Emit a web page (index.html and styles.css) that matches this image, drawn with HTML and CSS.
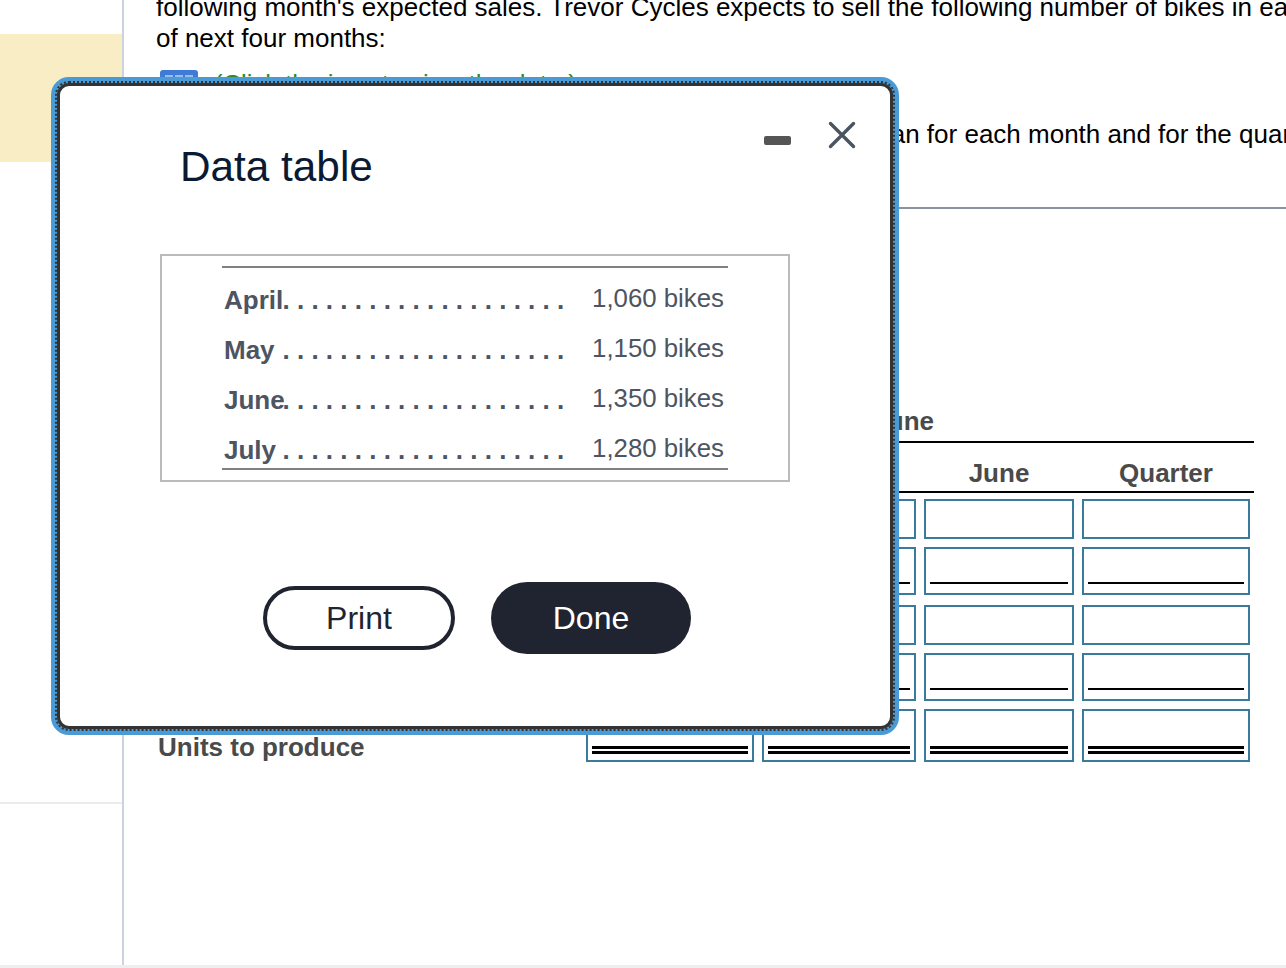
FILE: index.html
```html
<!DOCTYPE html>
<html lang="en">
<head>
<meta charset="utf-8">
<title>Data table</title>
<link rel="stylesheet" href="styles.css">
</head>
<body>
<div class="page">
  <aside class="sidebar">
    <div class="highlight"></div>
    <div class="side-rule"></div>
  </aside>
  <main class="main">
    <p class="intro">following month's expected sales. Trevor Cycles expects to sell the following number of bikes in each<br>of next four months:</p>
    <div class="data-link">
      <svg class="data-icon" viewBox="0 0 38 30" aria-hidden="true"><rect width="38" height="30" rx="3" fill="#3f7bd6"/><path d="M5 5h8v6H5zM15 5h8v6h-8zM25 5h8v6h-8zM5 13h8v6H5zM15 13h8v6h-8zM25 13h8v6h-8zM5 21h8v6H5zM15 21h8v6h-8zM25 21h8v6h-8z" fill="#9dbcee"/></svg>
      <span class="data-text">(Click the icon to view the data.)</span>
    </div>
    <p class="task">Prepare Trevor Cycles' production plan for each month and for the quarter ended June 30.</p>
    <hr class="divider">
    <div class="budget">
      <div class="b-title">April through June</div>
      <div class="b-head"></div>
      <div class="b-head">April</div>
      <div class="b-head">May</div>
      <div class="b-head">June</div>
      <div class="b-head">Quarter</div>
      <div class="b-rule"></div>

      <div class="b-label r1">Budgeted sales</div>
      <div class="cell r1"></div><div class="cell r1"></div><div class="cell r1"></div><div class="cell r1"></div>

      <div class="b-label r2">Plus: Desired ending inventory</div>
      <div class="cell single r2"><span class="line"></span></div><div class="cell single r2"><span class="line"></span></div><div class="cell single r2"><span class="line"></span></div><div class="cell single r2"><span class="line"></span></div>

      <div class="b-label r3">Total needed</div>
      <div class="cell r3"></div><div class="cell r3"></div><div class="cell r3"></div><div class="cell r3"></div>

      <div class="b-label r4">Less: Beginning inventory</div>
      <div class="cell single r4"><span class="line"></span></div><div class="cell single r4"><span class="line"></span></div><div class="cell single r4"><span class="line"></span></div><div class="cell single r4"><span class="line"></span></div>

      <div class="b-label total r5">Units to produce</div>
      <div class="cell double r5"><span class="line2"></span></div><div class="cell double r5"><span class="line2"></span></div><div class="cell double r5"><span class="line2"></span></div><div class="cell double r5"><span class="line2"></span></div>
    </div>
  </main>
</div>
<div class="page-end"></div>

<section class="modal" aria-label="Data table">
  <div class="modal-dots">
    <div class="modal-body">
      <header class="modal-head">
        <h2 class="modal-title">Data table</h2>
        <div class="modal-controls">
          <span class="minimize"></span>
          <svg class="close" viewBox="0 0 28 28" aria-hidden="true"><path d="M2.5 2.5l23 23M25.5 2.5l-23 23" stroke="#4a5562" stroke-width="3.4" stroke-linecap="round" fill="none"/></svg>
        </div>
      </header>
      <div class="data-box">
        <table class="data-table">
          <tr><th><span class="leader"><span class="name">April</span><span class="dots">. . . . . . . . . . . . . . . . . . . .</span></span></th><td>1,060 bikes</td></tr>
          <tr><th><span class="leader"><span class="name">May</span><span class="dots">. . . . . . . . . . . . . . . . . . . .</span></span></th><td>1,150 bikes</td></tr>
          <tr><th><span class="leader"><span class="name">June</span><span class="dots">. . . . . . . . . . . . . . . . . . . .</span></span></th><td>1,350 bikes</td></tr>
          <tr><th><span class="leader"><span class="name">July</span><span class="dots">. . . . . . . . . . . . . . . . . . . .</span></span></th><td>1,280 bikes</td></tr>
        </table>
      </div>
      <div class="modal-actions">
        <button class="btn btn-print" type="button">Print</button>
        <button class="btn btn-done" type="button">Done</button>
      </div>
    </div>
  </div>
</section>
</body>
</html>
```

FILE: styles.css
```css
* { box-sizing: border-box; }
html, body { margin: 0; padding: 0; }
body {
  position: relative;
  width: 1286px;
  height: 968px;
  overflow: hidden;
  background: #fff;
  font-family: "Liberation Sans", Arial, sans-serif;
  font-size: 26px;
  color: #000;
}
.page { display: flex; height: 965px; }
.page-end { height: 3px; background: #eeeeee; }

.sidebar {
  width: 124px;
  flex: none;
  border-right: 2px solid #cdd2e0;
  padding-top: 34px;
}
.highlight { height: 128px; background: #f8edc4; }
.side-rule { height: 2px; margin-top: 640px; background: #ebebeb; }

.main { flex: 1; min-width: 0; padding-left: 32px; }
.intro {
  margin: -8px 0 0;
  line-height: 31px;
  white-space: nowrap;
}
.data-link { display: flex; align-items: flex-start; gap: 16px; height: 30px; margin-top: 15px; white-space: nowrap; padding-left: 4px; }
.data-icon { width: 38px; height: 30px; margin-top: 1px; flex: none; }
.data-text { color: #2c8a2c; font-size: 25.6px; line-height: 30px; }
.task {
  margin: 20px 0 0;
  line-height: 30px;
  white-space: nowrap;
  padding-left: 315px;
}
.divider { border: 0; height: 2px; background: #8b93a1; margin: 58px 0 0 -32px; }

.budget {
  display: grid;
  grid-template-columns: 420px 168px 154px 150px 168px;
  grid-template-rows: 36px 48px 2px 46px 56px 50px 56px 61px;
  column-gap: 8px;
  width: 1096px;
  margin: 198px 0 0 2px;
}
.b-title {
  grid-column: 2 / 6;
  margin-right: -4px;
  height: 36px;
  padding-right: 320px;
  text-align: right;
  font-weight: 700;
  color: #4a4a4a;
  line-height: 28px;
  border-bottom: 2px solid #000;
  white-space: nowrap;
}
.b-head {
  font-weight: 700;
  color: #4a4a4a;
  text-align: center;
  line-height: 60px;
  height: 48px;
}
.b-rule {
  grid-column: 2 / 6;
  margin-right: -4px;
  height: 2px;
  background: #000;
}
.b-label { font-weight: 700; color: #4a4a4a; line-height: 40px; white-space: nowrap; }
.b-label.total { line-height: 30px; padding-top: 23px; }

.cell {
  border: 2px solid #3a7a9c;
  background: #fff;
  display: flex;
  flex-direction: column;
  justify-content: flex-end;
}
.r1 { height: 40px; margin-top: 6px; }
.r2 { height: 48px; margin-top: 8px; }
.r3 { height: 40px; margin-top: 10px; }
.r4 { height: 48px; margin-top: 8px; }
.r5 { height: 53px; margin-top: 8px; }

.single { padding: 0 4px 9px; }
.line { display: block; height: 2px; background: #000; }
.double { padding: 0 4px 6px; }
.line2 { display: block; height: 8px; border-top: 3px solid #000; border-bottom: 3px solid #000; }

/* dialog */
.modal {
  position: absolute;
  left: 51px;
  top: 77px;
  width: 848px;
  height: 658px;
  border: 4px solid #4a9ad6;
  border-radius: 18px;
  background: #4a9ad6;
}
.modal-dots {
  height: 100%;
  border: 2px dotted #333;
  border-radius: 14px;
}
.modal-body {
  height: 100%;
  border: 3px solid #333;
  border-radius: 12px;
  background: #fff;
  padding: 0 0 0 100px;
  overflow: hidden;
}
.modal-head { display: flex; justify-content: space-between; height: 168px; padding-right: 34px; }
.modal-title {
  margin: 55px 0 0 20px;
  font-size: 42.3px;
  line-height: 52px;
  font-weight: 400;
  color: #0b1a33;
}
.modal-controls { display: flex; align-items: flex-start; gap: 37px; height: 28px; margin-top: 35px; }
.minimize { width: 27px; height: 9px; border-radius: 2px; background: #555; margin-top: 15px; }
.close { width: 28px; height: 28px; }

.data-box {
  width: 630px;
  height: 228px;
  border: 2px solid #bbb;
  padding: 10px 0 0 60px;
}
.data-table {
  border-collapse: separate;
  border-spacing: 0;
  table-layout: fixed;
  width: 506px;
  border-top: 2px solid #808080;
  border-bottom: 2px solid #808080;
}
.data-table tr { height: 50px; }
.data-table th, .data-table td { vertical-align: top; }
.data-table th {
  width: 344px;
  padding: 14px 0 0 2px;
  font-weight: 700;
  text-align: left;
  color: #4d5462;
  line-height: 36px;
}
.leader { display: grid; width: 342px; height: 36px; overflow: hidden; white-space: nowrap; }
.name, .dots { grid-area: 1 / 1; }
.dots { padding-left: 58.5px; }
.data-table td {
  padding: 12px 4px 0 0;
  font-size: 25.8px;
  text-align: right;
  color: #4d5462;
  line-height: 36px;
  white-space: nowrap;
}

.modal-actions { display: flex; align-items: center; gap: 36px; margin: 100px 0 0 103px; }
.btn {
  font-family: "Liberation Sans", Arial, sans-serif;
  font-size: 32px;
  border-radius: 40px;
  padding: 0;
}
.btn-print { width: 192px; height: 64px; background: #fff; border: 4px solid #1f2430; color: #1f2430; }
.btn-done { width: 200px; height: 72px; background: #1f2430; border: 0; color: #fff; }
```
